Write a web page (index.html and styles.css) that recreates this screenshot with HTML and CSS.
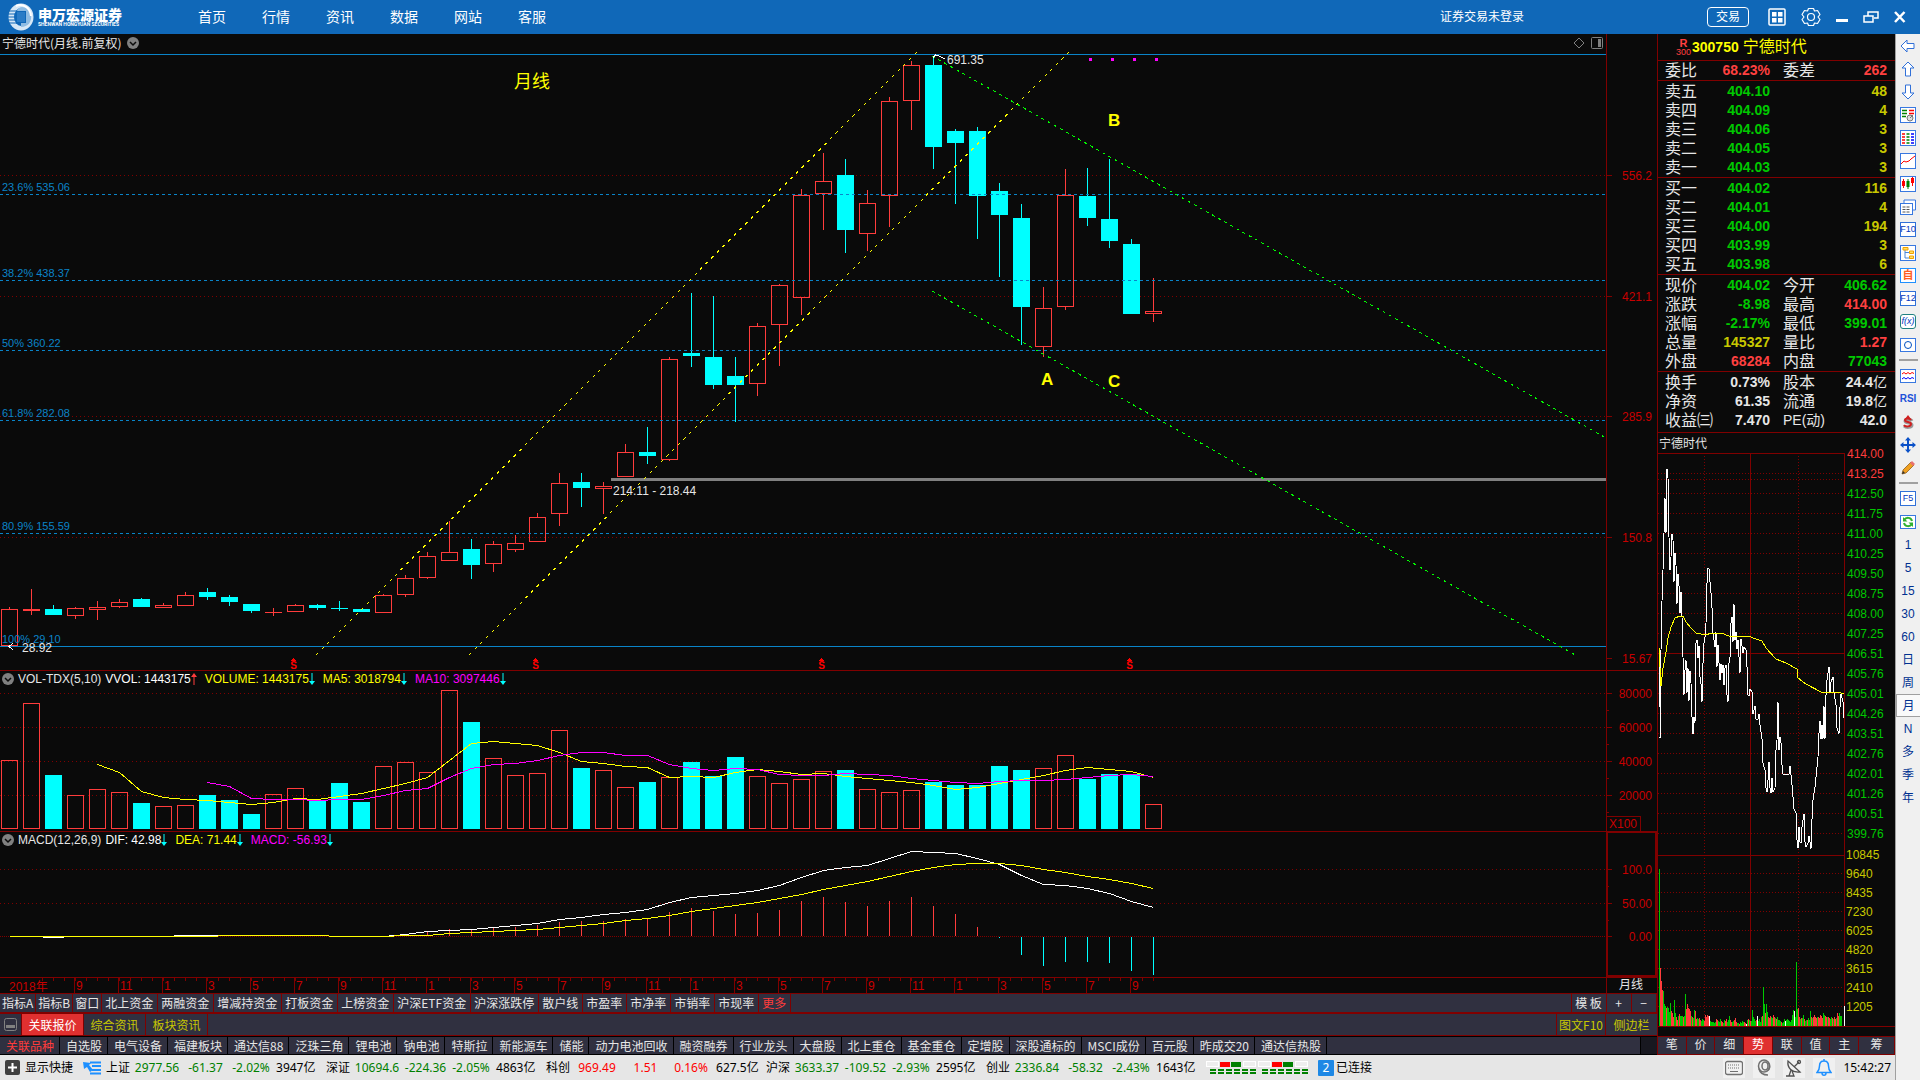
FILE: index.html
```html
<!DOCTYPE html>
<html lang="zh-CN">
<head>
<meta charset="utf-8">
<title>申万宏源证券 - 宁德时代</title>
<link rel="stylesheet" href="styles.css">
</head>
<body>
<header class="topbar">
  <a class="logo" href="#">
    <svg width="26" height="28" viewBox="0 0 26 28" aria-hidden="true">
      <ellipse cx="13" cy="14" rx="12.5" ry="13.5" fill="#d7e8f6"/>
      <ellipse cx="13" cy="14" rx="7" ry="9" fill="#1068b8"/>
      <path d="M9 8h9v12h-5v4c7 0 11-5 10-12-1-5-5-8-9-8-2 0-4 1-5 4z" fill="#8fbce2"/>
      <rect x="9" y="9" width="8" height="10" fill="#2a7cc6"/>
      <path d="M1 8h8M0 11h8M0 14h8M0 17h8M1 20h8" stroke="#1068b8" stroke-width="1"/>
      <path d="M8 3c6-3 14 1 15 10" stroke="#fff" stroke-width="2" fill="none"/>
    </svg>
    <span class="logo-words"><b>申万宏源证券</b><small>SHENWAN HONGYUAN SECURITIES</small></span>
  </a>
  <nav class="menu">
    <a href="#">首页</a><a href="#">行情</a><a href="#">资讯</a><a href="#">数据</a><a href="#">网站</a><a href="#">客服</a>
  </nav>
  <span class="login-state">证券交易未登录</span>
  <div class="win-tools">
    <button class="trade">交易</button>
    <button class="win" aria-label="布局"><svg width="18" height="18"><rect x="1" y="1" width="16" height="16" rx="1" fill="none" stroke="#fff" stroke-width="1.5"/><path d="M4 4h4.500v4.500h-4.500zM10 4h4.500v4.500h-4.500zM4 10h4.500v4.500h-4.500zM10 10h4.500v4.500h-4.500z" fill="#fff"/></svg></button>
    <button class="win" aria-label="设置"><svg width="20" height="20" fill="none" stroke="#fff" stroke-width="1.200"><path d="M7.500 1.500h5l1 2.500 3-.5 2.500 4-2 2.500 2 2.500-2.500 4-3-.5-1 2.500h-5l-1-2.500-3 .5-2.500-4 2-2.500-2-2.500 2.500-4 3 .5z" stroke-linejoin="round"/><circle cx="10" cy="10" r="3.500"/></svg></button>
    <button class="win" aria-label="最小化"><svg width="12" height="18"><rect y="11" width="12" height="3" fill="#fff"/></svg></button>
    <button class="win" aria-label="还原"><svg width="16" height="18" fill="none" stroke="#fff" stroke-width="1.500"><path d="M5 8v-4h10v6h-4"/><path d="M1 8h9v6h-9z"/></svg></button>
    <button class="win" aria-label="关闭"><svg width="12" height="18"><path d="M1 4l9.500 10M10.500 4l-9.500 10" stroke="#fff" stroke-width="2.500"/></svg></button>
  </div>
</header>
<div class="shell">
  <div class="desk">
    <div class="work">
      <main class="charts">
        <section class="pane">
          <div class="plot">
            <div class="pane-head title-head">
              <span>宁德时代(月线.前复权)</span>
              <button class="drop" aria-label="菜单"><svg width="12" height="12"><circle cx="6" cy="6" r="6" fill="#808080"/><path d="M3 5l3 3 3-3" fill="none" stroke="#0a0a0a" stroke-width="1.500"/></svg></button>
              <span class="head-icons">
                <svg width="12" height="12"><path d="M6 1l5 5-5 5-5-5z" fill="none" stroke="#808080"/></svg>
                <svg width="12" height="12"><rect x=".5" y=".5" width="11" height="11" rx="1" fill="none" stroke="#808080"/><rect x="7" y="2" width="3" height="8" fill="#808080"/></svg>
              </span>
            </div>
            <svg class="price-plot" id="price"></svg>
          </div>
          <svg class="scale price-scale" id="price-scale"></svg>
        </section>
        <section class="pane ruled">
          <div class="plot">
            <div class="pane-head">
              <button class="drop" aria-label="菜单"><svg width="12" height="12"><circle cx="6" cy="6" r="6" fill="#808080"/><path d="M3 5l3 3 3-3" fill="none" stroke="#0a0a0a" stroke-width="1.500"/></svg></button>
              <span class="ind">VOL-TDX(5,10)</span>
              <span class="val">VVOL: 1443175<svg width="6" height="14"><path d="M3 13v-9" stroke="#ff3c3c"/><path d="M0 5l3-4 3 4z" fill="#ff3c3c"/></svg></span>
              <span class="val yellow">VOLUME: 1443175<svg width="6" height="14"><path d="M3 1v9" stroke="#0ff"/><path d="M0 9l3 4 3-4z" fill="#0ff"/></svg></span>
              <span class="val yellow">MA5: 3018794<svg width="6" height="14"><path d="M3 1v9" stroke="#0ff"/><path d="M0 9l3 4 3-4z" fill="#0ff"/></svg></span>
              <span class="val magenta">MA10: 3097446<svg width="6" height="14"><path d="M3 1v9" stroke="#0ff"/><path d="M0 9l3 4 3-4z" fill="#0ff"/></svg></span>
            </div>
            <svg class="vol-plot" id="volume"></svg>
          </div>
          <svg class="scale vol-scale" id="volume-scale"></svg>
        </section>
        <section class="pane ruled">
          <div class="plot">
            <div class="pane-head">
              <button class="drop" aria-label="菜单"><svg width="12" height="12"><circle cx="6" cy="6" r="6" fill="#808080"/><path d="M3 5l3 3 3-3" fill="none" stroke="#0a0a0a" stroke-width="1.500"/></svg></button>
              <span class="ind">MACD(12,26,9)</span>
              <span class="val">DIF: 42.98<svg width="6" height="14"><path d="M3 1v9" stroke="#0ff"/><path d="M0 9l3 4 3-4z" fill="#0ff"/></svg></span>
              <span class="val yellow">DEA: 71.44<svg width="6" height="14"><path d="M3 1v9" stroke="#0ff"/><path d="M0 9l3 4 3-4z" fill="#0ff"/></svg></span>
              <span class="val magenta">MACD: -56.93<svg width="6" height="14"><path d="M3 1v9" stroke="#0ff"/><path d="M0 9l3 4 3-4z" fill="#0ff"/></svg></span>
            </div>
            <svg class="macd-plot" id="macd"></svg>
          </div>
          <svg class="scale macd-scale" id="macd-scale"></svg>
        </section>
        <div class="timeline"><svg id="months"></svg><span class="period">月线</span></div>
        <div class="tools">
          <button class="tight">指标A</button><button class="tight">指标B</button><button class="tight">窗口</button><button>北上资金</button><button>两融资金</button><button>增减持资金</button><button>打板资金</button><button>上榜资金</button><button>沪深ETF资金</button><button>沪深涨跌停</button><button>散户线</button><button>市盈率</button><button>市净率</button><button>市销率</button><button>市现率</button><button class="more">更多</button>
          <span class="fill"></span>
          <button class="cell36">模 板</button><button class="cell25">+</button><button class="cell25">−</button>
        </div>
        <div class="news">
          <button class="fold" aria-label="收起"><svg width="13" height="13"><rect x=".5" y=".5" width="12" height="12" rx="2" fill="none" stroke="#808080"/><rect x="2" y="7" width="9" height="3" fill="#808080"/></svg></button>
          <button class="on">关联报价</button><button>综合资讯</button><button>板块资讯</button>
          <span class="fill"></span>
          <button class="f10">图文F10</button><button class="side">侧边栏</button>
        </div>
        <div class="blocks">
          <button class="hot">关联品种</button><button>自选股</button><button>电气设备</button><button>福建板块</button><button>通达信88</button><button>泛珠三角</button><button>锂电池</button><button>钠电池</button><button>特斯拉</button><button>新能源车</button><button>储能</button><button>动力电池回收</button><button>融资融券</button><button>行业龙头</button><button>大盘股</button><button>北上重仓</button><button>基金重仓</button><button>定增股</button><button>深股通标的</button><button>MSCI成份</button><button>百元股</button><button>昨成交20</button><button>通达信热股</button>
          <span class="fill"></span><span class="nub"></span>
        </div>
      </main>
      <aside class="quote">
        <h1 class="stock"><span class="tag"><b>R</b><small>300</small></span><b>300750</b><span>宁德时代</span></h1>
        <table class="q one"><tr><th>委比</th><td class="up">68.23%</td><th>委差</th><td class="up">262</td></tr></table>
        <table class="q">
          <tr><th>卖五</th><td class="dn">404.10</td><th></th><td class="qty">48</td></tr>
          <tr><th>卖四</th><td class="dn">404.09</td><th></th><td class="qty">4</td></tr>
          <tr><th>卖三</th><td class="dn">404.06</td><th></th><td class="qty">3</td></tr>
          <tr><th>卖二</th><td class="dn">404.05</td><th></th><td class="qty">3</td></tr>
          <tr><th>卖一</th><td class="dn">404.03</td><th></th><td class="qty">3</td></tr>
        </table>
        <table class="q">
          <tr><th>买一</th><td class="dn">404.02</td><th></th><td class="qty">116</td></tr>
          <tr><th>买二</th><td class="dn">404.01</td><th></th><td class="qty">4</td></tr>
          <tr><th>买三</th><td class="dn">404.00</td><th></th><td class="qty">194</td></tr>
          <tr><th>买四</th><td class="dn">403.99</td><th></th><td class="qty">3</td></tr>
          <tr><th>买五</th><td class="dn">403.98</td><th></th><td class="qty">6</td></tr>
        </table>
        <table class="q">
          <tr><th>现价</th><td class="dn">404.02</td><th>今开</th><td class="dn">406.62</td></tr>
          <tr><th>涨跌</th><td class="dn">-8.98</td><th>最高</th><td class="up">414.00</td></tr>
          <tr><th>涨幅</th><td class="dn">-2.17%</td><th>最低</th><td class="dn">399.01</td></tr>
          <tr><th>总量</th><td class="qty">145327</td><th>量比</th><td class="up">1.27</td></tr>
          <tr><th>外盘</th><td class="up">68284</td><th>内盘</th><td class="dn">77043</td></tr>
        </table>
        <table class="q last">
          <tr><th>换手</th><td>0.73%</td><th>股本</th><td>24.4<i>亿</i></td></tr>
          <tr><th>净资</th><td>61.35</td><th>流通</th><td>19.8<i>亿</i></td></tr>
          <tr><th>收益㈢</th><td>7.470</td><th class="pe">PE(动)</th><td>42.0</td></tr>
        </table>
        <h2 class="mini-title">宁德时代</h2>
        <svg class="mini" id="minute"></svg>
        <div class="mini-tabs">
          <button>笔</button><button>价</button><button>细</button><button class="on">势</button><button>联</button><button>值</button><button>主</button><button class="wide">筹</button>
        </div>
      </aside>
    </div>
    <footer class="status">
      <button class="quick"><svg width="15" height="15"><rect width="15" height="15" rx="2" fill="#404040"/><path d="M7.500 3v9M3 7.500h9" stroke="#fff" stroke-width="2"/></svg>显示快捷</button>
      <svg class="list-icon" width="18" height="14"><path d="M7 1.500h11M9 5h9M9 9h9M7 12.500h11" stroke="#1e90ff" stroke-width="2"/><path d="M0 1l8 1-2 2 4 5-3 2-3-5-3 2z" fill="#1e90ff"/></svg>
      <div class="index green"><b>上证</b><span>2977.56</span><span>-61.37</span><span>-2.02%</span><i>3947亿</i></div>
      <div class="index green"><b>深证</b><span>10694.6</span><span>-224.36</span><span>-2.05%</span><i>4863亿</i></div>
      <div class="index red"><b>科创</b><span>969.49</span><span>1.51</span><span>0.16%</span><i>627.5亿</i></div>
      <div class="index green"><b>沪深</b><span>3633.37</span><span>-109.52</span><span>-2.93%</span><i>2595亿</i></div>
      <div class="index green"><b>创业</b><span>2336.84</span><span>-58.32</span><span>-2.43%</span><i>1643亿</i></div>
      <svg class="lamp" width="50" height="14" shape-rendering="crispEdges"><path d="M.5.500h12v5h-12zM37.500.500h12v5h-12z" fill="#eee" stroke="#fff"/><path d="M14 1h10v5h-10z" fill="#f00"/><path d="M25 1h10v5h-10z" fill="#008000"/><path d="M4 9h46M4 12h46" stroke="#008000" stroke-width="2" stroke-dasharray="6 2"/></svg>
      <svg class="lamp" width="50" height="14" shape-rendering="crispEdges"><path d="M.5.500h12v5h-12zM37.500.500h12v5h-12z" fill="#eee" stroke="#fff"/><path d="M14 1h10v5h-10z" fill="#f00"/><path d="M25 1h10v5h-10z" fill="#008000"/><path d="M4 9h46M4 12h46" stroke="#008000" stroke-width="2" stroke-dasharray="6 2"/></svg>
      <span class="badge">2</span><span>已连接</span>
      <div class="tray">
        <button aria-label="键盘"><svg width="18" height="16" fill="none" stroke="#707070"><rect x=".5" y="1.500" width="17" height="13" rx="2" stroke-width="1.300"/><path d="M3 5h12M3 8h12" stroke-dasharray="1 1"/><path d="M5 11.500h8"/></svg></button>
        <button aria-label="耳机"><svg width="16" height="18" fill="none" stroke="#707070" stroke-width="1.500"><ellipse cx="8" cy="7" rx="5.500" ry="6"/><ellipse cx="9" cy="7" rx="3" ry="4"/><path d="M3 10c1 4 4 6 9 6M12 3c3 3 2 8-1 9"/></svg></button>
        <button aria-label="卫星"><svg width="18" height="18" fill="none" stroke="#505050" stroke-width="1.300"><path d="M3 2c-1 7 4 12 12 11zM9 8l5-5M6 11l-2 6M1 17h8l-2-5"/><circle cx="14" cy="3" r="1.500"/></svg></button>
        <button aria-label="提醒"><svg width="16" height="18" fill="none" stroke="#1e90ff" stroke-width="1.500"><path d="M8 2c-3 0-4.500 2-4.500 5 0 4-1 5-2.500 6.500h14c-1.500-1.500-2.500-2.500-2.500-6.500 0-3-1.500-5-4.500-5zM8 0v2M6 14c0 3 4 3 4 0"/></svg></button>
      </div>
      <time>15:42:27</time>
    </footer>
  </div>
  <nav class="rail">
    <button aria-label="后退"><svg width="16" height="16"><path d="M1 8l6-6v3.500h7v5h-7v3.500z" class="arrow"/></svg></button>
    <button aria-label="上翻"><svg width="16" height="16"><path d="M8 1l6 6h-3.500v8h-5v-8h-3.500z" class="arrow"/></svg></button>
    <button aria-label="下翻"><svg width="16" height="16"><path d="M8 15l6-6h-3.500v-8h-5v8h-3.500z" class="arrow"/></svg></button>
    <button aria-label="定制"><svg width="16" height="16"><rect x=".5" y=".5" width="15" height="15" class="box"/><path d="M2 3.500h5M2 6.500h5M2 9.500h4" stroke="#008000" stroke-width="1.500"/><path d="M9 3.500h5M9 6.500h5" stroke="#f00" stroke-width="1.500"/><circle cx="10" cy="11" r="3" fill="#ddd" stroke="#777"/><path d="M10 11l3-3" stroke="#777"/></svg></button>
    <button aria-label="报价"><svg width="16" height="16"><rect x=".5" y=".5" width="15" height="15" class="box"/><path d="M2 4h3M2 7h3M2 10h3M2 13h3" stroke="#f00" stroke-width="1.500"/><path d="M6.500 4h3M6.500 7h3M6.500 10h3M6.500 13h3" stroke="#008000" stroke-width="1.500"/><path d="M11 4h3M11 7h3M11 10h3M11 13h3" stroke="#00f" stroke-width="1.500"/></svg></button>
    <button aria-label="分时"><svg width="16" height="16"><rect x=".5" y=".5" width="15" height="15" class="box"/><path d="M1 11l3-3 2 1 3-1 2-2 4-3" fill="none" stroke="#f00"/></svg></button>
    <button aria-label="K线"><svg width="16" height="16"><rect x=".5" y=".5" width="15" height="15" class="box"/><path d="M2 5h3v5h-3zM3 3h1v9h-1zM11 2h3v5h-3zM12 1h1v9h-1z" fill="#f00"/><path d="M6.500 5h3v6h-3zM7.500 3h1v10h-1z" fill="#008000"/></svg></button>
    <button aria-label="报表"><svg width="16" height="16"><path d="M4 4v-3h11.500v10h-3" class="box"/><rect x=".5" y="4.500" width="12" height="11" class="box"/><path d="M2.500 8h8M2.500 10.500h8M2.500 13h8" stroke="#555" stroke-dasharray="3 1"/></svg></button>
    <button><span class="sq">F10</span></button>
    <button aria-label="板块树"><svg width="16" height="16"><rect x=".5" y=".5" width="15" height="15" class="box"/><path d="M5 5v8h5M5 7.500h5" fill="none" stroke="#4a86d8"/><path d="M3 2.500h5v2.500h-5zM9.500 6h4v2.500h-4zM9.500 11h4v2.500h-4z" fill="#ffe060" stroke="#f0a000"/></svg></button>
    <button><span class="sq self">自</span></button>
    <button><span class="sq">F12</span></button>
    <button aria-label="公式"><span class="sq fx">f(x)</span></button>
    <button aria-label="周期"><svg width="16" height="16"><rect x=".5" y="1.500" width="15" height="13" class="box"/><circle cx="8" cy="8" r="3.500" fill="none" stroke="#0050c0"/></svg></button>
    <hr>
    <button aria-label="叠加"><svg width="16" height="16"><rect x=".5" y="1.500" width="15" height="13" class="box"/><path d="M2 6l2-1.500 2 1.500 2-1.500 2 1.500 2-1.500 2 1" fill="none" stroke="#f00"/><path d="M2 11l2-1.500 2 1.500 2-1.500 2 1.500 2-1.500 2 1" fill="none" stroke="#00f"/></svg></button>
    <button><span class="rsi">RSI</span></button>
    <button class="dollar" aria-label="除权"><svg width="16" height="16"><path d="M5 5l3-4 3 4z" fill="#d02020"/><path d="M12 7c-1-2-7-2-7 0 0 3 7 1 7 4s-6 3-8 1" fill="none" stroke="#999" stroke-width="3"/><path d="M11 6c-1-2-6-2-6 0 0 3 6 1 6 4s-6 3-7 1" fill="none" stroke="#d02020" stroke-width="2"/></svg></button>
    <button aria-label="移动"><svg width="16" height="16"><path d="M8 0l3 3.500h-2v3.500h3.500v-2l3.500 3-3.500 3v-2h-3.500v3.500h2l-3 3.500-3-3.500h2v-3.500h-3.500v2l-3.500-3 3.500-3v2h3.500v-3.500h-2z" fill="#0a50c8"/></svg></button>
    <button aria-label="画线"><svg width="16" height="16"><path d="M2 14l1-4 8-8 3 3-8 8z" fill="#f0a020" stroke="#805010" stroke-width=".7"/><path d="M10 3l2-2 3 3-2 2z" fill="#e87070"/><path d="M2 14l1-3 2 2z" fill="#333"/></svg></button>
    <hr>
    <button><span class="sq">F5</span></button>
    <button aria-label="刷新"><svg width="16" height="16"><rect x=".5" y="1.500" width="15" height="13" class="box"/><path d="M12 7c-1-4-6-4-8-1M4 9c1 4 6 4 8 1" fill="none" stroke="#30b030" stroke-width="2"/><path d="M3 3v4.500h4.500zM13 13v-4.500h-4.500z" fill="#30b030"/></svg></button>
    <button>1</button><button>5</button><button>15</button><button>30</button><button>60</button><button>日</button><button>周</button><button class="pressed">月</button><button>N</button><button>多</button><button>季</button><button>年</button>
  </nav>
</div>
<script src="charts.js"></script>
</body>
</html>
```
FILE: styles.css
```css
* { box-sizing: border-box; }
body {
  margin: 0;
  background: #0a0a0a;
  color: #e6e6e6;
  font: 12px/16px "Liberation Sans", "Noto Sans CJK SC", sans-serif;
  min-height: 100vh;
  display: flex;
  flex-direction: column;
}
button {
  font: inherit;
  color: inherit;
  background: none;
  border: 0;
  margin: 0;
  padding: 0;
  white-space: nowrap;
}
a { color: inherit; text-decoration: none; }
svg { display: block; flex: none; }

.topbar {
  height: 34px;
  background: #1068b8;
  color: #fff;
  display: flex;
  align-items: center;
  padding: 0 14px 0 8px;
}
.logo { display: flex; align-items: center; gap: 4px; width: 190px; }
.logo-words { display: flex; flex-direction: column; }
.logo-words b { font: 900 14px/14px "Noto Sans CJK SC", sans-serif; }
.logo-words small { font: bold 5px/6px Roboto, sans-serif; }
.menu { display: flex; gap: 36px; font: 14px/20px "Noto Sans CJK SC", sans-serif; padding-bottom: 2px; }
.login-state { margin-left: auto; padding-bottom: 2px; font-family: "Noto Sans CJK SC", sans-serif; }
.win-tools { display: flex; align-items: center; margin-left: 183px; gap: 15px; }
.win { display: flex; }
.trade {
  width: 42px;
  height: 20px;
  border: 1px solid #fff;
  border-radius: 4px;
  margin-right: 4px;
  line-height: 18px;
}

.shell { display: flex; flex: 1; }
.desk { flex: 1; min-width: 0; display: flex; flex-direction: column; }
.work { display: flex; flex: 1; }
.charts { flex: 1; min-width: 0; display: flex; flex-direction: column; }

.pane { display: flex; }
.ruled { border-top: 1px solid #800000; }
.plot { flex: 1; min-width: 0; }
.plot > svg { width: 100%; overflow: visible; }
.price-plot { height: 616px; }
.vol-plot { height: 144px; }
.macd-plot { height: 129px; }
.scale { width: 51px; border-left: 1px solid #800000; }
.price-scale { height: 636px; }
.vol-scale { height: 160px; }
.macd-scale { height: 145px; border: 2px solid #800000; border-top-width: 1px; }
.pane-head {
  height: 16px;
  display: flex;
  align-items: center;
  padding-left: 2px;
  white-space: nowrap;
}
.title-head { height: 20px; padding: 0 3px 2px 2px; font-family: "Noto Sans CJK SC", sans-serif; }
.title-head .drop { margin-left: 6px; }
.head-icons { display: flex; gap: 6px; margin-left: auto; }
.ind { margin: 0 4px; }
.val { display: flex; align-items: center; margin-right: 8px; color: #fff; }
.val.yellow { color: #ff0; }
.val.magenta { color: #f0f; }

.timeline { height: 16px; border-top: 1px solid #800000; display: flex; }
.timeline svg { flex: 1; height: 15px; }
.period { width: 51px; border-left: 1px solid #800000; padding-left: 12px; line-height: 15px; }

.tools, .news, .blocks { display: flex; background: #303040; font-family: "Noto Sans CJK SC", sans-serif; }
.fill { flex: 1; }
.tools { height: 21px; border-top: 1px solid #800000; border-bottom: 2px solid #800000; line-height: 18px; }
.tools button { border-right: 1px solid #800000; padding: 0 4px 0 3px; }
.tools .tight { padding: 0 2px; }
.tools .more { color: #ff3c3c; }
.tools .cell36 { width: 36px; border-left: 1px solid #800000; }
.tools .cell25 { width: 25px; }
.news { height: 22px; border-bottom: 1px solid #800000; color: #c8c800; line-height: 21px; }
.news button { width: 62px; border-right: 1px solid #800000; }
.news .fold { width: 22px; display: flex; align-items: center; justify-content: center; }
.news .on { background: #e03030; color: #fff; }
.news .f10 { width: 50px; border-left: 1px solid #800000; }
.news .side { width: 51px; border: 0; }
.blocks { height: 19px; border-top: 1px solid #000; border-bottom: 1px solid #000; line-height: 17px; }
.blocks button { padding: 0 5px 0 6px; border-right: 1px solid #000; }
.blocks .hot { color: #ff3c3c; }
.nub { width: 17px; background: #181820; border-left: 1px solid #000; }

.quote {
  width: 238px;
  border-left: 1px solid #800000;
  display: flex;
  flex-direction: column;
}
.stock {
  margin: 0;
  height: 27px;
  border-bottom: 1px solid #800000;
  display: flex;
  align-items: center;
  padding-left: 17px;
  color: #ff0;
  font-size: 14px;
  font-weight: normal;
}
.stock > span:last-child { font-size: 16px; margin-left: 4px; }
.tag { display: flex; flex-direction: column; align-items: center; color: #ff4040; width: 17px; }
.tag b { font-size: 11px; line-height: 10px; }
.tag small { font-size: 9px; line-height: 9px; }
.q {
  width: 100%;
  table-layout: fixed;
  border-spacing: 0;
  border-bottom: 1px solid #800000;
  padding-top: 1px;
}
.q.one { padding: 0; }
.q.last { padding-bottom: 2px; }
.q th, .q td { padding: 0; height: 19px; line-height: 19px; white-space: nowrap; }
.q th { width: 56px; text-align: left; padding-left: 7px; font-size: 16px; font-weight: normal; }
.q th ~ th { width: 60px; padding-left: 13px; }
.q th.pe { font-size: 14px; }
.q td { width: 56px; text-align: right; font-size: 14px; font-weight: bold; }
.q td:last-child { width: auto; padding-right: 8px; }
.q i { font-style: normal; font-weight: normal; }
.up { color: #ff4040; }
.dn { color: #00c800; }
.qty { color: #c8c800; }
.mini-title { margin: 0; padding: 2px 0 0 1px; height: 20px; font-size: 12px; font-weight: normal; font-family: "Noto Sans CJK SC", sans-serif; }
.mini { width: 100%; height: 583px; overflow: visible; }
.mini-tabs { display: flex; height: 19px; background: #303040; border: 1px solid #800000; border-left: 0; line-height: 17px; }
.mini-tabs button { flex: 1; border-right: 1px solid #800000; }
.mini-tabs .wide { width: 35px; flex: none; border: 0; }
.mini-tabs .on { background: #e03030; color: #fff; }

.status {
  height: 25px;
  background: #e6e6e6;
  color: #000;
  display: flex;
  align-items: center;
  padding: 0 4px 0 5px;
  font: 12px/18px "Noto Sans", "Noto Sans CJK SC", sans-serif;
}
.quick { display: flex; align-items: center; gap: 5px; }
.list-icon { margin: 0 5px 0 10px; }
.index { display: grid; grid-template-columns: 26px 50px 47px 44px 53px; }
.index span { text-align: center; }
.index b, .index i { font-style: normal; font-weight: normal; color: #000; }
.index i { padding-left: 3px; }
.green { color: #008000; }
.red { color: #f00; }
.lamp { margin-right: 2px; }
.badge {
  width: 16px;
  height: 16px;
  line-height: 16px;
  text-align: center;
  color: #fff;
  background: #1e88e5;
  border-radius: 1px;
  margin: 0 2px 0 8px;
}
.tray { display: flex; gap: 8px; margin-left: auto; }
.tray button { width: 22px; height: 20px; background: #f0f0f0; display: flex; align-items: center; justify-content: center; }
time { margin-left: 8px; }

.rail {
  width: 25px;
  background: #f0f0f0;
  border-left: 1px solid #a0a0a0;
  color: #003090;
  display: flex;
  flex-direction: column;
}
.rail button { height: 23px; display: flex; align-items: center; justify-content: center; }
.rail hr { width: 19px; height: 2px; border: 0; background: #a0a0a0; margin: 3px auto; }
.rail .pressed { background: #fafafa; border: 1px solid #a0a0a0; border-right: 0; }
.arrow { fill: #fff; stroke: #3070d8; }
.box { fill: #fff; stroke: #3878e0; }
.sq {
  width: 16px;
  height: 15px;
  border: 1px solid #3070d8;
  background: #fff;
  font-size: 9px;
  line-height: 13px;
  color: #0038c0;
  text-align: center;
  display: flex;
  justify-content: center;
}
.self { color: #ff6020; font-weight: bold; font-size: 11px; border-color: #1e90ff; }
.fx { font-style: italic; border-color: #208080; border-radius: 3px; }
.rsi { font-size: 10px; font-weight: bold; color: #2050d8; }

.bull { fill: none; stroke: #ff3c3c; }
.bull-wick { fill: #ff3c3c; }
.bear { fill: #0ff; }
.grid { stroke: #800000; stroke-dasharray: 1 3; }
.grid.zero { stroke-dasharray: 1 1; }
.grid.fine { stroke-dasharray: 1 2; }
.rule { stroke: #800000; }
.fib { stroke: #0a84c8; stroke-dasharray: 3 3; }
.fib.solid { stroke-dasharray: none; }
.fib-label { fill: #0a84c8; font-size: 11px; }
.trend { stroke: #ff0; stroke-dasharray: 3 5; }
.channel { stroke: #0f0; stroke-dasharray: 3 4; }
.gap-line { stroke: #808080; stroke-width: 3; }
.line { fill: none; }
.white { stroke: #fff; }
.gold { stroke: #ff0; }
.pink { stroke: #f0f; }
.note { fill: #e6e6e6; }
.wave { fill: #ff0; font-size: 17px; font-weight: bold; }
.caption { fill: #ff0; font-size: 18px; }
.bonus { fill: #f00; font-size: 10px; font-weight: bold; }
.mark { fill: #f0f; }
.axis { fill: #c80000; }
.tick-up { fill: #ff3c3c; }
.tick-dn { fill: #00c800; }
.tick-vol { fill: #c8c800; }
.m-g { fill: #00c800; }
.m-r { fill: #ff3c3c; }
.m-w { fill: #fff; }
```
FILE: charts.js
```js
const NS = 'http://www.w3.org/2000/svg';
const STEP = 22;
const FIRST = 9;

// Opens a drawing layer whose vertical origin is shifted up by `top`.
function layer(id, top) {
  const g = document.createElementNS(NS, 'g');
  g.setAttribute('transform', `translate(0,${-top})`);
  document.getElementById(id).appendChild(g);
  return g;
}
function add(g, name, cls, attrs, text) {
  const e = document.createElementNS(NS, name);
  e.setAttribute('class', cls);
  if (name !== 'text') e.setAttribute('shape-rendering', 'crispEdges');
  for (const k in attrs) e.setAttribute(k, attrs[k]);
  if (text !== undefined) e.textContent = text;
  g.appendChild(e);
}
const hline = (g, cls, y, x1 = 0, x2 = '100%') => add(g, 'line', cls, { x1, x2, y1: y + 0.5, y2: y + 0.5 });
const seg = (g, cls, x1, y1, x2, y2) => add(g, 'line', cls, { x1, y1, x2, y2 });
const rect = (g, cls, x, y, width, height) => add(g, 'rect', cls, { x, y, width, height });
const label = (g, cls, x, y, t, anchor = 'start') => add(g, 'text', cls, { x, y, 'text-anchor': anchor }, t);
const series = (g, cls, from, ys) =>
  add(g, 'polyline', 'line ' + cls, { points: ys.map((y, i) => `${FIRST + 0.5 + (from + i) * STEP},${y + 0.5}`).join(' ') });

// direction, high, body top, body bottom, low
const candles = [
  ['r',607,609,646,646],['r',589,609,611,615],['c',605,609,615,615],['r',607,608,616,619],['r',601,607,610,620],
  ['r',599,602,607,608],['c',598,599,607,607],['r',603,605,608,608],['r',592,595,606,606],['c',588,592,597,600],
  ['c',595,597,602,606],['c',604,604,611,613],['r',608,612,613,616],['r',604,605,612,612],['c',604,605,608,610],
  ['c',601,608,609,611],['c',609,609,612,612],['r',594,595,613,613],['r',575,578,595,597],['r',552,556,578,579],
  ['r',521,552,561,561],['c',539,549,565,579],['r',541,544,564,572],['r',535,543,550,552],['r',513,517,542,542],
  ['r',473,483,514,526],['c',473,482,488,507],['r',482,486,489,514],['r',444,452,477,477],['c',427,452,456,464],
  ['r',357,359,460,461],['c',293,353,356,367],['c',296,357,385,389],['c',357,376,385,422],['r',323,326,384,396],
  ['r',284,285,325,366],['r',189,195,298,315],['r',153,181,194,230],['c',159,175,230,253],['r',190,203,234,251],
  ['r',97,101,196,227],['r',61,65,101,130],['c',56,65,147,169],['c',129,131,143,204],['c',127,131,196,239],
  ['c',183,191,215,277],['c',204,218,307,345],['r',287,308,347,357],['r',169,195,307,310],['c',168,196,218,226],
  ['c',159,219,241,248],['c',239,244,314,314],['r',278,311,314,322],
];
const volumes = [760,703,775,795,789,792,803,806,805,795,800,814,794,788,800,783,802,766,762,772,690,722,758,775,773,730,768,770,787,782,777,762,776,757,776,783,779,771,770,789,792,790,782,785,785,766,770,768,755,779,774,774,804];
const volBear = new Set([2, 6, 9, 10, 11, 14, 15, 16, 21, 26, 29, 31, 32, 33, 38, 42, 43, 44, 45, 46, 49, 50, 51]);

function drawPrice() {
  const g = layer('price', 54);
  const s = layer('price-scale', 34);
  [[175, '556.2'], [296, '421.1'], [416, '285.9'], [537, '150.8']].forEach(([y, t]) => {
    hline(g, 'grid', y);
    hline(s, 'rule', y, 0, 5);
    label(s, 'axis', 45, y + 5, t, 'end');
  });
  hline(s, 'rule', 658, 0, 5);
  label(s, 'axis', 45, 663, '15.67', 'end');

  add(g, 'line', 'gap-line', { x1: 611, x2: '100%', y1: 479.5, y2: 479.5 });
  candles.forEach(([d, hi, top, bot, lo], i) => {
    const x = FIRST + i * STEP;
    if (d === 'c') {
      rect(g, 'bear', x, hi, 1, lo - hi);
      rect(g, 'bear', x - 8, top, 17, bot - top);
    } else {
      rect(g, 'bull-wick', x, hi, 1, top - hi);
      rect(g, 'bull-wick', x, bot, 1, lo - bot);
      if (bot - top === 1) rect(g, 'bull-wick', x - 8, top, 17, 1);
      else rect(g, 'bull', x - 7.5, top + 0.5, 16, bot - top - 1);
    }
  });
  hline(g, 'fib solid', 54);
  hline(g, 'fib solid', 646);
  [194, 280, 350, 420, 533].forEach(y => hline(g, 'fib', y));
  [[191, '23.6% 535.06'], [277, '38.2% 438.37'], [347, '50% 360.22'], [417, '61.8% 282.08'], [530, '80.9% 155.59'], [643, '100% 29.10']]
    .forEach(([y, t]) => label(g, 'fib-label', 2, y, t));
  seg(g, 'trend', 316, 655, 917, 52);
  seg(g, 'trend', 469, 655, 1069, 52);
  seg(g, 'channel', 932, 56, 1606, 438);
  seg(g, 'channel', 932, 291, 1577, 656);

  label(g, 'caption', 514, 88, '月线');
  label(g, 'note', 613, 495, '214.11 - 218.44');
  label(g, 'note', 947, 64, '691.35');
  label(g, 'note', 22, 652, '28.92');
  add(g, 'path', 'line white', { d: 'M13 643l-4 3.500 4 3.500M933 58l3-4M934 55l5 1 6 3' });
  label(g, 'wave', 1108, 126, 'B');
  label(g, 'wave', 1041, 385, 'A');
  label(g, 'wave', 1108, 387, 'C');
  [1089, 1111, 1133, 1155].forEach(x => rect(g, 'mark', x, 58, 3, 3));
  [293, 535, 821, 1129].forEach(x => {
    label(g, 'bonus', x + 0.5, 669, 'S', 'middle');
    add(g, 'path', 'bonus', { d: `M${x - 2} 661l2.500-3 2.500 3z` });
  });
}

function drawVolume() {
  const g = layer('volume', 687);
  const s = layer('volume-scale', 671);
  [[693, '80000'], [727, '60000'], [761, '40000'], [795, '20000']].forEach(([y, t]) => {
    hline(g, 'grid', y);
    hline(s, 'rule', y, 0, 5);
    hline(s, 'rule', y + 17, 0, 2);
    label(s, 'axis', 45, y + 5, t, 'end');
  });
  add(s, 'path', 'line rule', { d: 'M0 816.500h33v15' });
  label(s, 'axis', 2, 828, 'X100');
  volumes.forEach((y, i) => {
    const x = FIRST + i * STEP;
    if (volBear.has(i)) rect(g, 'bear', x - 8, y, 17, 829 - y);
    else rect(g, 'bull', x - 7.5, y + 0.5, 16, 828 - y);
  });
  series(g, 'gold', 4, [764,772,791,797,799,800,802,804,802,798,799,796,793,788,783,777,760,743,741,743,745,752,761,763,766,767,777,776,777,772,769,771,774,773,776,778,780,782,785,789,787,783,779,775,770,767,769,771,777]);
  series(g, 'pink', 9, [782,786,798,799,799,800,799,799,795,790,788,777,768,764,763,760,755,752,752,755,755,764,768,770,768,769,774,775,775,773,774,775,778,780,782,783,781,780,780,779,777,775,774,776]);
}

function drawMacd() {
  const g = layer('macd', 848);
  const s = layer('macd-scale', 833);
  hline(g, 'grid', 869);
  hline(g, 'grid', 903);
  hline(g, 'grid zero', 936);
  [[869, '100.0'], [903, '50.00'], [936, '0.00']].forEach(([y, t]) => {
    hline(s, 'rule', y, 0, 4);
    label(s, 'axis', 44, y + 5, t, 'end');
  });
  hline(s, 'rule', 886, 0, 1);
  hline(s, 'rule', 920, 0, 1);
  const bars = [934,931,929,929,927,927,925,922,921,921,919,919,912,908,911,914,913,910,901,897,902,906,901,897,906,914,927,938,955,966,962,962,963,971,975];
  bars.forEach((y, i) => {
    const x = FIRST + (18 + i) * STEP;
    if (y < 936) rect(g, 'bull-wick', x, y, 1, 936 - y);
    else rect(g, 'bear', x, 937, 1, y - 937);
  });
  const flat = [936,936,937,936,936,936,936,936,935,935,935,935,935,935,935,936,936,936];
  series(g, 'white', 0, [...flat, 934,931,930,929,927,925,923,919,917,914,912,909,902,897,895,893,890,885,877,870,867,865,858,851,852,853,858,864,875,884,885,888,893,901,907]);
  series(g, 'gold', 0, [936,936,936,936,936,936,936,936,936,936,935,935,935,935,935,936,936,936,935,935,933,932,931,930,929,927,925,923,920,918,915,911,908,905,902,898,894,889,885,881,876,871,867,864,863,863,865,869,872,876,879,883,888]);
}

function drawMonths() {
  const g = layer('months', 0);
  label(g, 'axis', 9, 13, '2018年');
  const names = ['9', '11', '1', '3', '5', '7'];
  for (let x = 42; x < 1160; x += 11) seg(g, 'rule', x + 0.5, 0, x + 0.5, 3);
  for (let i = 3, n = 0; i < 52; i += 2, n++) {
    const x = FIRST + i * STEP;
    seg(g, 'rule', x - 0.5, 0, x - 0.5, 16);
    label(g, 'axis', x + 1, 12, names[n % 6]);
  }
}

function drawMinute() {
  const g = layer('minute', 0);
  const vline = (cls, x) => seg(g, cls, x + 0.5, 0, x + 0.5, 573);
  for (let k = 1; k < 20; k++) if (k !== 10) hline(g, 'grid fine', k * 20, 0, 186);
  hline(g, 'grid fine', 26, 0, 186);
  for (let k = 0; k < 8; k++) hline(g, 'grid fine', 420 + k * 19, 0, 186);
  vline('grid fine', 46);
  vline('grid fine', 140);
  vline('rule', 92);
  vline('rule', 186);
  hline(g, 'rule', 0, 0, 187);
  hline(g, 'rule', 200, 0, 187);
  hline(g, 'rule', 402, 0, 187);
  hline(g, 'rule', 573, 0, '100%');
  ['414.00','413.25','412.50','411.75','411.00','410.25','409.50','408.75','408.00','407.25','406.51','405.76','405.01','404.26','403.51','402.76','402.01','401.26','400.51','399.76']
    .forEach((t, k) => label(g, k < 2 ? 'tick-up' : 'tick-dn', 189, k * 20 + 5, t));
  ['10845','9640','8435','7230','6025','4820','3615','2410','1205']
    .forEach((t, k) => label(g, 'tick-vol', 188, 406 + k * 19, t));

  // one column per traded minute: colour letter and height
  const bars = ('g157 r58 r45 r36 g35 g22 g20 r18 g19 g18 g14 g23 r15 r13 r9 g26 g13 r9 r6 g10 r12 g10 g10 g10 r9 g10 g32 r17 r22 r18 r17 r15 g10 r9 g8 g16 r15 r7 g8 g7 r8 r6 g5 g7 g6 r5 r11 r9 r11 r10 w10 g5 g4 g4 g4 g3 g4 r7 r6 g5 g4 g7 r5 r4 g3 g6 r5 r7 g4 g6 g10 r6 r4 g4 g5 r6 r8 r4 g3 g3 r2 g4 g3 g5 g4 r4 r3 w2 g6 r7 g6 r5 g5 g16 g9 g7 g5 r6 w10 g5 g7 g4 g9 r10 g39 g22 r13 g22 g14 r9 r8 r10 g9 g8 r11 r9 g8 r7 g9 g6 g6 g5 r4 g3 g4 g7 w5 g6 g7 g6 g5 g4 g6 g11 g16 w15 g9 g64 g17 r18 r9 g7 r8 g8 g11 r7 g5 g6 r6 g8 g6 g15 r9 g8 r9 r11 r9 r8 g9 r9 r8 r11 r10 r8 g13 g11 r10 r9 g9 r9 r8 g7 g9 r8 g7 r9 r7 g8 r13 r10 g13 g10 g10').split(' ');
  bars.forEach((b, i) => {
    const h = +b.slice(1);
    rect(g, 'm-' + b[0], i + 1, 573 - h, 1, h);
  });
  rect(g, 'm-w', 186, 553, 1, 20);

  add(g, 'polyline', 'line white', { points: '1,210 2,254 2,285 3,197 4,148 5,117 6,80 7,45 8,80 9,16 10,25 11,84 12,117 13,104 14,81 15,87 16,129 17,100 18,112 19,151 20,121 21,133 22,160 23,139 24,164 25,204 26,242 27,217 28,207 29,240 30,215 31,248 32,218 33,230 34,264 35,281 36,264 37,270 38,190 39,187 40,205 41,193 42,224 43,231 44,249 45,210 46,190 47,184 48,170 49,130 50,115 51,116 52,129 53,140 54,155 55,180 57,194 58,179 59,214 60,192 61,210 62,227 63,211 64,220 65,212 66,232 67,215 68,212 69,242 70,249 71,210 72,205 73,170 74,164 75,189 76,151 77,187 78,179 79,196 80,187 82,220 83,186 85,200 86,194 88,197 89,214 90,242 91,243 92,236 94,239 95,261 97,253 98,266 100,266 101,261 102,272 104,286 105,310 107,317 108,335 109,339 110,327 111,309 112,335 113,340 114,325 115,339 117,335 118,297 119,287 120,249 121,297 122,284 123,290 124,312 125,321 131,321 132,313 133,322 134,332 135,344 136,356 138,360 139,387 140,395 141,374 142,389 143,390 144,374 146,361 147,389 148,394 150,390 151,383 152,389 153,396 154,366 155,347 157,334 158,324 160,304 161,280 162,268 163,286 164,272 165,286 166,253 167,286 168,242 169,227 171,214 172,240 173,229 175,224 176,239 178,252 179,275 181,281 182,254 183,241 185,249 186,265' });
  add(g, 'polyline', 'line gold', { points: '1,195 3,233 5,215 8,199 10,185 13,174 17,165 22,163 25,163 28,169 33,175 38,180 48,182 53,180 63,180 71,183 90,183 98,186 104,188 108,195 118,206 128,210 139,216 140,225 148,231 163,239 180,239 186,241' });
}

drawPrice();
drawVolume();
drawMacd();
drawMonths();
drawMinute();
```
